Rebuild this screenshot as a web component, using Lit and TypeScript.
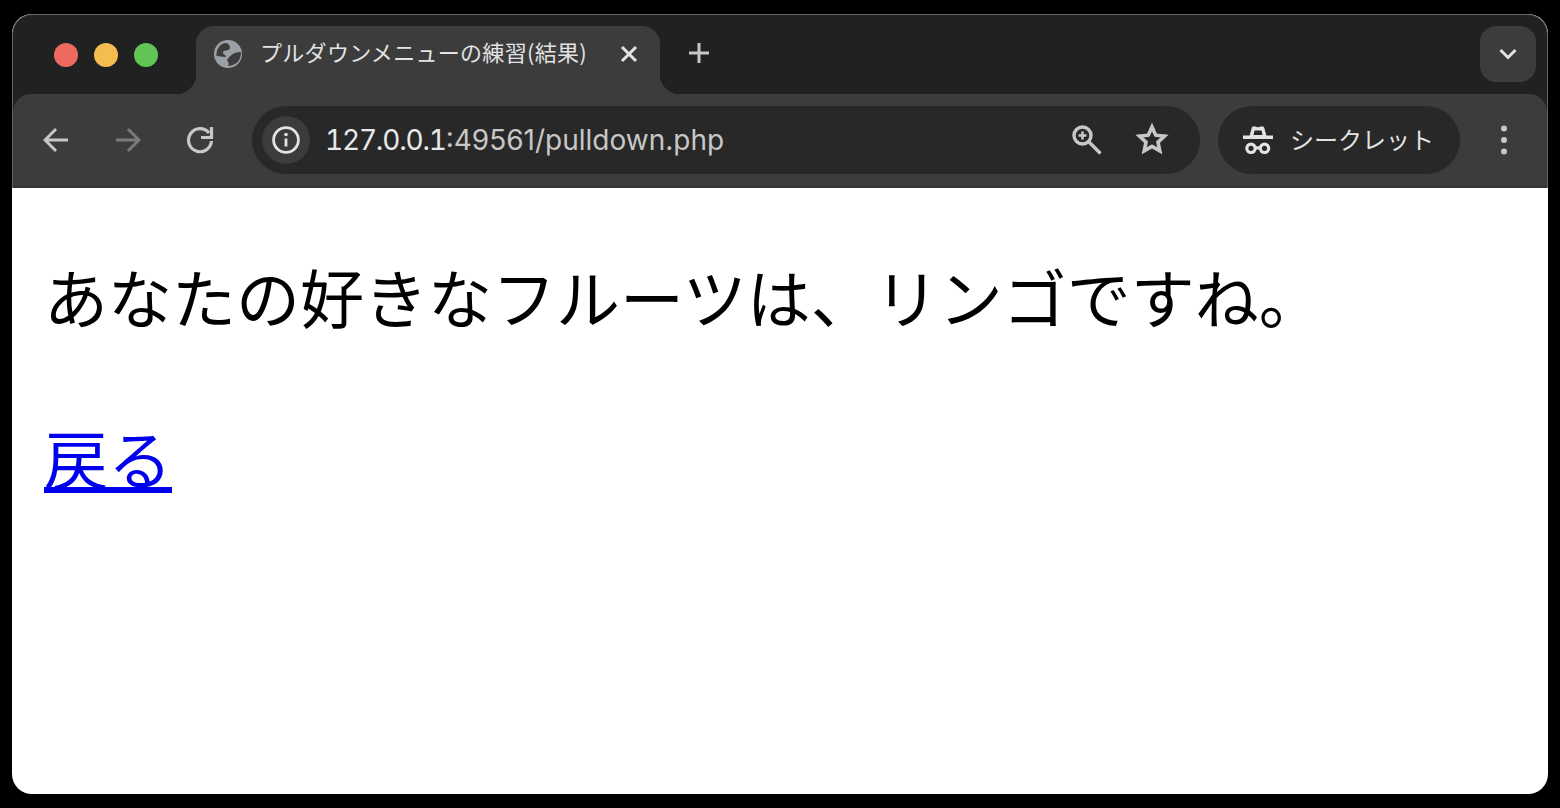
import { css, html, LitElement } from "lit";
import { customElement } from "lit/decorators.js";

@customElement("app-root")
export class AppRoot extends LitElement {
    static styles = css`
        :host {
            display: block;
            height: 808px;
            box-sizing: border-box;
            padding: 14px 12px;
            background: #000;
            font-family: Inter, "Noto Sans CJK JP", sans-serif;
        }

        .window {
            height: 780px;
            display: flex;
            flex-direction: column;
            border-radius: 20px;
            overflow: hidden;
            background: #fff;
        }

        .chrome {
            height: 174px;
            box-sizing: border-box;
            display: flex;
            flex-direction: column;
            background: #202221;
            border: 1px solid #626463;
            border-bottom: none;
            border-radius: 20px 20px 0 0;
        }

        .tabstrip {
            height: 79px;
            flex: none;
            display: flex;
            align-items: flex-start;
        }

        .lights {
            width: 183px;
            height: 79px;
            flex: none;
            box-sizing: border-box;
            padding: 28px 0 0 41px;
            display: flex;
            gap: 16px;
        }

        .light {
            width: 24px;
            height: 24px;
            border-radius: 50%;
        }

        .tab {
            position: relative;
            width: 464px;
            height: 68px;
            margin-top: 11px;
            flex: none;
            box-sizing: border-box;
            padding: 0 22px 12px 18px;
            display: flex;
            align-items: center;
            background: #3c3c3c;
            border-radius: 18px 18px 0 0;
            color: #e3e3e3;
            font-family: "Noto Sans CJK JP", sans-serif;
            font-size: 22px;
        }

        .tab::before,
        .tab::after {
            content: "";
            position: absolute;
            bottom: 0;
            width: 20px;
            height: 20px;
        }

        .tab::before {
            left: -20px;
            background: radial-gradient(circle at 0 0, transparent 20px, #3c3c3c 20.5px);
        }

        .tab::after {
            right: -20px;
            background: radial-gradient(circle at 100% 0, transparent 20px, #3c3c3c 20.5px);
        }

        .tab-title {
            margin: 0 0 6px 18px;
            flex: 1;
            white-space: nowrap;
            letter-spacing: 0.3px;
        }

        .tab-plus {
            margin: 28px 0 0 29px;
            flex: none;
        }

        .tab-search {
            margin: 11px 11px 0 auto;
            width: 56px;
            height: 56px;
            flex: none;
            display: flex;
            align-items: center;
            justify-content: center;
            background: #3c3c3c;
            border-radius: 16px;
        }

        .toolbar {
            flex: 1;
            display: flex;
            align-items: flex-start;
            box-sizing: border-box;
            padding: 12px 0 0 7px;
            background: #3c3c3c;
            border-radius: 18px 18px 0 0;
            border-bottom: 2px solid #333;
        }

        .nav {
            width: 72px;
            height: 68px;
            flex: none;
            display: flex;
            align-items: center;
            justify-content: center;
        }

        .omnibox {
            width: 948px;
            height: 68px;
            margin-left: 16px;
            flex: none;
            box-sizing: border-box;
            padding: 0 31px 0 10px;
            display: flex;
            align-items: center;
            background: #282828;
            border-radius: 34px;
        }

        .info {
            width: 48px;
            height: 48px;
            flex: none;
            display: flex;
            align-items: center;
            justify-content: center;
            background: #3c3c3c;
            border-radius: 50%;
        }

        .url {
            margin-left: 15px;
            flex: 1;
            color: #c7c7c7;
            font-size: 28px;
            white-space: nowrap;
        }

        .url b {
            font-weight: 400;
            color: #e8e8e8;
            font-variant-numeric: tabular-nums;
            letter-spacing: -1.2px;
        }

        .omni-icons {
            display: flex;
            align-items: center;
            gap: 33px;
        }

        .star {
            margin-bottom: 4px;
        }

        .incognito {
            width: 242px;
            height: 68px;
            margin-left: 18px;
            flex: none;
            box-sizing: border-box;
            padding-left: 25px;
            display: flex;
            align-items: center;
            gap: 17px;
            background: #282828;
            border-radius: 34px;
            color: #e3e3e3;
            font-family: "Noto Sans CJK JP", sans-serif;
            font-size: 24px;
        }

        .incognito span {
            margin-bottom: 4px;
        }

        .menu {
            width: 88px;
            height: 68px;
            flex: none;
            display: flex;
            align-items: center;
            justify-content: center;
        }

        .page {
            flex: 1;
            font-family: "Noto Sans CJK JP", sans-serif;
            font-size: 64px;
            font-weight: 400;
            line-height: 96px;
            padding: 59px 32px 0 32px;
            color: #000;
        }

        .page p {
            margin: 0 0 65px;
            white-space: nowrap;
        }

        .page a {
            color: #0000ee;
            text-decoration: underline;
            text-decoration-thickness: 6px;
        }

        svg {
            display: block;
            flex: none;
        }
    `;

    render() {
        return html`<div class="window">
            <div class="chrome">
                <div class="tabstrip">
                    <div class="lights">
                        <span class="light" style="background:#ee6a5f"></span>
                        <span class="light" style="background:#f5bd4f"></span>
                        <span class="light" style="background:#61c454"></span>
                    </div>
                    <div class="tab">
                        <svg width="28" height="28" viewBox="0 0 28 28">
                            <circle cx="14" cy="14" r="14" fill="#9aa0a6"/>
                            <path d="M2.500 16C2 9 6 4 11 3c3 0 5 2 5 5-1 3-4 2-6 3-2 1-1 3 1 4 1 1 1 2 0 2-3 0-6-1-8.500-1z" fill="#3c3c3c"/>
                            <path d="M13 20c2-3 5-6 8-7 2-1 4-1 6-1 0 5-2 10-6 12-2 1-5 2-7 2 1-2 1-3 0-4z" fill="#3c3c3c"/>
                        </svg>
                        <span class="tab-title">プルダウンメニューの練習(結果)</span>
                        <svg width="18" height="18" viewBox="0 0 18 18" fill="none" stroke="#e3e3e3" stroke-width="3">
                            <path d="M2 2l14 14M16 2L2 16"/>
                        </svg>
                    </div>
                    <svg class="tab-plus" width="20" height="20" viewBox="0 0 20 20" fill="none" stroke="#c7c7c7" stroke-width="3">
                        <path d="M10 0v20M0 10h20"/>
                    </svg>
                    <div class="tab-search">
                        <svg width="18" height="12" viewBox="0 0 18 12" fill="none" stroke="#e3e3e3" stroke-width="3">
                            <path d="M1.500 2L9 9.500 16.500 2"/>
                        </svg>
                    </div>
                </div>
                <div class="toolbar">
                    <div class="nav">
                        <svg width="26" height="26" viewBox="0 0 26 26" fill="none" stroke="#c7c7c7" stroke-width="3">
                            <path d="M25 13H3M13 2L2 13l11 11"/>
                        </svg>
                    </div>
                    <div class="nav">
                        <svg width="26" height="26" viewBox="0 0 26 26" fill="none" stroke="#7a7a7a" stroke-width="3">
                            <path d="M1 13h22M13 2l11 11-11 11"/>
                        </svg>
                    </div>
                    <div class="nav">
                        <svg width="28" height="28" viewBox="0 0 28 28" fill="none" stroke="#c7c7c7" stroke-width="3.200">
                            <path d="M23 7A11.500 11.500 0 1 0 25.500 15"/>
                            <path d="M25.500 1v10.500H15"/>
                        </svg>
                    </div>
                    <div class="omnibox">
                        <div class="info">
                            <svg width="28" height="28" viewBox="0 0 28 28" fill="none" stroke="#e3e3e3" stroke-width="2.800">
                                <circle cx="14" cy="14" r="12.400"/>
                                <path d="M14 12.500v8"/>
                                <circle cx="14" cy="8.500" r="1.800" fill="#e3e3e3" stroke="none"/>
                            </svg>
                        </div>
                        <span class="url"><b>127.0.0.1</b>:49561/pulldown.php</span>
                        <div class="omni-icons">
                            <svg width="30" height="30" viewBox="0 0 30 30" fill="none" stroke="#c7c7c7" stroke-width="3.400">
                                <circle cx="10.500" cy="10.500" r="8.500"/>
                                <path d="M16.500 16.500l12 12"/>
                                <path d="M10.500 6.500v8M6.500 10.500h8" stroke-width="2.600"/>
                            </svg>
                            <svg class="star" width="34" height="32" viewBox="0 0 34 32" fill="none" stroke="#c7c7c7" stroke-width="3.600">
                                <path d="M17 5l3.700 8.200 8.800 1-6.500 6 1.800 8.700L17 24.400l-7.800 4.500 1.800-8.700-6.500-6 8.800-1z"/>
                            </svg>
                        </div>
                    </div>
                    <div class="incognito">
                        <svg width="30" height="30" viewBox="0 0 30 30">
                            <path d="M7 11L9.500 2h3.500l2 1 2-1h3.500L23 11z" fill="#e3e3e3" stroke="#e3e3e3" stroke-width="1"/>
                            <path d="M11.500 5.500h7l1 4.500h-9z" fill="#282828"/>
                            <path d="M0 10.500h30V14H0z" fill="#e3e3e3"/>
                            <g fill="none" stroke="#e3e3e3" stroke-width="3.200">
                                <circle cx="8" cy="23.300" r="4.200"/>
                                <circle cx="21.500" cy="23.300" r="4.200"/>
                                <path d="M12 22.800h6"/>
                            </g>
                        </svg>
                        <span>シークレット</span>
                    </div>
                    <div class="menu">
                        <svg width="8" height="30" viewBox="0 0 8 30" fill="#c7c7c7">
                            <circle cx="4" cy="3.500" r="3"/>
                            <circle cx="4" cy="15" r="3"/>
                            <circle cx="4" cy="26.500" r="3"/>
                        </svg>
                    </div>
                </div>
            </div>
            <div class="page">
                <p>あなたの好きなフルーツは、リンゴですね。</p>
                <a href="#">戻る</a>
            </div>
        </div>`;
    }
}

declare global {
    interface HTMLElementTagNameMap {
        "app-root": AppRoot;
    }
}
